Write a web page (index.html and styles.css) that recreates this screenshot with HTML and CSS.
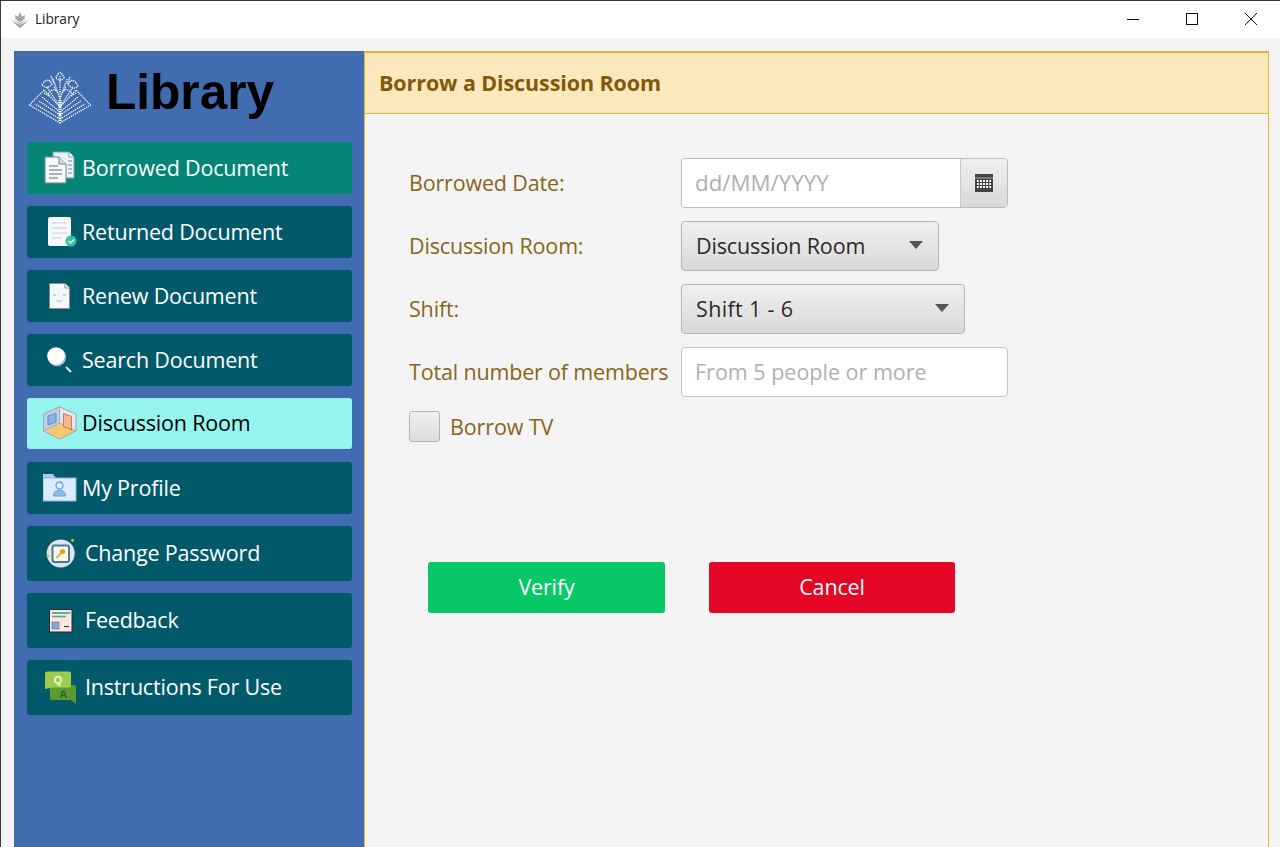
FILE: index.html
```html
<!DOCTYPE html>
<html>
<head>
    <title>Library</title>
    <meta charset="utf-8">
    <link rel="stylesheet" href="styles.css">
</head>
<body>
<div class="window">
    <!-- Title bar -->
    <div class="titlebar">
        <svg class="title-icon" width="18" height="18" viewBox="0 0 18 18">
            <path d="M0 9.5 L9 14 L18 9.5 L9 17 Z" fill="#a0a0a0"/>
            <path d="M1.5 8 L9 12 L16.5 8 L9 14 Z" fill="#bdbdbd"/>
            <path d="M4.5 8 L4 4 L7 5.5 L9 1 L11 5.5 L14 4 L13.5 8 L9 11.5 Z" fill="#a8a8a8"/>
        </svg>
        <span class="title-text">Library</span>
        <div class="win-controls">
            <svg class="win-btn" width="12" height="12" viewBox="0 0 12 12"><path d="M0 6.5 H12" stroke="#111" fill="none"/></svg>
            <svg class="win-btn" width="12" height="12" viewBox="0 0 12 12"><rect x="0.5" y="0.5" width="11" height="11" stroke="#111" fill="none"/></svg>
            <svg class="win-btn" width="12" height="12" viewBox="0 0 12 12"><path d="M0 0 L12 12 M12 0 L0 12" stroke="#111" fill="none"/></svg>
        </div>
    </div>

    <div class="shell">
        <!-- Left menu -->
        <aside class="sidebar">
            <div class="brand">
                <svg class="brand-logo" width="62" height="56" viewBox="0 0 62 56">
                    <g fill="none" stroke="#fff" stroke-width="1.25" stroke-dasharray="1.3 0.9">
                        <path d="M31 54 L0.5 36 L15 21 L31 38 L47 21 L61.5 36 Z"/>
                        <path d="M31 50 L6 35 M31 46 L10 32 M31 43 L13 28 M31 50 L56 35 M31 46 L52 32 M31 43 L49 28"/>
                        <path d="M31 52 V6 M30 52 V30 M32 52 V30 M31 38 L18 18 M31 38 L44 18 M31 30 L24 10 M31 30 L38 10"/>
                        <path d="M27 9 Q31 -2 35 9 Q31 13 27 9 M13 16 Q18 7 23 15 Q18 21 13 16 M39 15 Q44 7 49 17 Q44 22 39 15 M19 25 Q25 17 29 24 M33 24 Q38 17 43 25"/>
                        <path d="M22 7 L25 14 M41 8 L38 15 M15 24 L20 27 M47 24 L42 27 M25 18 L28 22 M37 18 L34 22 M20 11 L22 13 M43 11 L40 13"/>
                    </g>
                </svg>
                <span class="brand-name">Library</span>
            </div>

            <nav class="menu">
                <a class="menu-item menu-current">
                    <svg class="menu-icon" width="40" height="40" viewBox="0 0 40 40">
                        <path d="M10 4 H26 L31 9 V30 H10 Z" fill="#e9f1f6" stroke="#8d9aa6"/>
                        <path d="M26 4 V9 H31" fill="#fff" stroke="#8d9aa6"/>
                        <path d="M25 13 H29 M25 17 H29 M25 21 H29 M25 25 H29" stroke="#9fb0bd" stroke-width="1.4"/>
                        <path d="M2 9 H16 L23 16 V35 H2 Z" fill="#f4f8fa" stroke="#77858f"/>
                        <path d="M16 9 V16 H23" fill="#d5e0e7" stroke="#77858f"/>
                        <path d="M6 18 H15 M6 22 H19 M6 26 H19 M6 30 H15" stroke="#8d9aa6" stroke-width="1.4"/>
                    </svg>
                    <span>Borrowed Document</span>
                </a>
                <a class="menu-item">
                    <svg class="menu-icon" width="40" height="40" viewBox="0 0 40 40">
                        <rect x="5" y="5" width="23" height="29" rx="2" fill="#f6f8f9"/>
                        <path d="M9 11 H24 M9 16 H24 M9 21 H24 M9 26 H19" stroke="#d7dde1" stroke-width="1.3"/>
                        <circle cx="28" cy="29" r="5.5" fill="#2bc6a0"/>
                        <path d="M25.5 29 L27.5 31 L31 27.5" stroke="#fff" stroke-width="1.5" fill="none"/>
                    </svg>
                    <span>Returned Document</span>
                </a>
                <a class="menu-item">
                    <svg class="menu-icon" width="40" height="40" viewBox="0 0 40 40">
                        <path d="M6.5 7.5 H22 L26.5 12 V32.5 H6.5 Z" fill="#f5f8fa" stroke="#8c8a8a"/>
                        <path d="M22 7.5 V12 H26.5" fill="#fff" stroke="#8c8a8a"/>
                        <path d="M10 19 H13 M20 19 H23" stroke="#bcd2e4" stroke-width="1.8"/>
                        <path d="M12.5 24 Q16.5 30 20.5 24 Z" fill="#bfe0f2"/>
                    </svg>
                    <span>Renew Document</span>
                </a>
                <a class="menu-item">
                    <svg class="menu-icon" width="40" height="40" viewBox="0 0 40 40">
                        <circle cx="14" cy="17" r="9.2" fill="#9cb6d6"/>
                        <circle cx="13" cy="16" r="8.8" fill="#fff"/>
                        <path d="M23 27 L28 32" stroke="#e8eef2" stroke-width="1.8"/>
                    </svg>
                    <span>Search Document</span>
                </a>
                <a class="menu-item menu-selected">
                    <svg class="menu-icon" width="40" height="40" viewBox="0 0 40 40">
                        <path d="M16.5 3 L33 10 V27 L16.5 35 L0.5 27 V10 Z" fill="#f6c873" stroke="#a9a4a0"/>
                        <path d="M16.5 3 L0.5 10 V27 L16.5 19 Z" fill="#b6d0ee" stroke="#a9a4a0" stroke-width="0.8"/>
                        <path d="M16.5 3 L33 10 V27 L16.5 19 Z" fill="#dbe7f5" stroke="#a9a4a0" stroke-width="0.8"/>
                        <path d="M5 12 L13 9.5 V18 L5 21 Z" fill="#8fb2e0" stroke="#5c7ea8" stroke-width="0.8"/>
                        <path d="M20.5 9.5 L28.5 12.5 V26 L20.5 22.5 Z" fill="#f5b58a" stroke="#c2673b" stroke-width="0.8"/>
                    </svg>
                    <span>Discussion Room</span>
                </a>
                <a class="menu-item">
                    <svg class="menu-icon" width="40" height="40" viewBox="0 0 40 40">
                        <path d="M0 6 H10 L13 10 H33 V33 H0 Z" fill="#a9cbec"/>
                        <rect x="0" y="10" width="33" height="23" fill="#dcecfb" stroke="#8fb8e2"/>
                        <circle cx="16.5" cy="17.5" r="3.5" fill="#dcecfb" stroke="#6d9fdc" stroke-width="1.3"/>
                        <path d="M10.5 28 Q10.5 22.5 16.5 22.5 Q22.5 22.5 22.5 28 Z" fill="#8fbbe8" stroke="#6d9fdc"/>
                    </svg>
                    <span>My Profile</span>
                </a>
                <a class="menu-item menu-tall">
                    <svg class="menu-icon" width="40" height="40" viewBox="0 0 40 40">
                        <circle cx="17.7" cy="19.5" r="14" fill="#dfe3f4"/>
                        <rect x="9.5" y="11.5" width="16.5" height="16.5" rx="2" fill="#fdf7ea" stroke="#3f8287" stroke-width="2"/>
                        <circle cx="19.5" cy="17.5" r="2.6" fill="#e89a2c"/>
                        <path d="M18 19 L13.5 24" stroke="#e89a2c" stroke-width="1.8"/>
                        <circle cx="29.5" cy="6.5" r="1.4" fill="#e8b93c"/>
                        <circle cx="5" cy="22" r="1.5" fill="#e8b93c"/>
                    </svg>
                    <span>Change Password</span>
                </a>
                <a class="menu-item menu-tall">
                    <svg class="menu-icon" width="40" height="40" viewBox="0 0 40 40">
                        <rect x="6.5" y="8.5" width="22.5" height="22.5" fill="#fbe6e4" stroke="#23292c"/>
                        <path d="M9 12 H27" stroke="#4bb07c" stroke-width="1.8"/>
                        <path d="M9 15.5 H23" stroke="#4bb07c" stroke-width="1.6"/>
                        <rect x="9" y="21" width="7" height="7" fill="#8aa6d0" stroke="#5a7699" stroke-width="0.7"/>
                        <path d="M21 25.5 H26" stroke="#3a3f42" stroke-width="1.2"/>
                    </svg>
                    <span>Feedback</span>
                </a>
                <a class="menu-item menu-tall">
                    <svg class="menu-icon" width="40" height="40" viewBox="0 0 40 40">
                        <path d="M9 17 H31 Q33 17 33 19 V36 L28 32 H9 Q7 32 7 30 V19 Q7 17 9 17 Z" fill="#5d9a30"/>
                        <path d="M5 3.5 H26 Q28 3.5 28 5.5 V17 Q28 19.5 26 19.5 H10 L2 21 V5.5 Q2 3.5 5 3.5 Z" fill="#9ccc49"/>
                        <text class="qa-q" x="15" y="15.5" text-anchor="middle">Q</text>
                        <text class="qa-a" x="20" y="30" text-anchor="middle">A</text>
                    </svg>
                    <span>Instructions For Use</span>
                </a>
            </nav>
        </aside>

        <!-- Borrow form -->
        <main class="panel">
            <div class="panel-head">Borrow a Discussion Room</div>
            <form class="panel-body">
                <div class="row">
                    <label class="field-label">Borrowed Date:</label>
                    <div class="date-picker">
                        <input class="date-input" type="text" placeholder="dd/MM/YYYY">
                        <button class="date-btn" type="button">
                            <svg width="18" height="18" viewBox="0 0 18 18">
                                <rect width="18" height="18" fill="#444"/>
                                <path d="M0 4 H18" stroke="#fff" stroke-width="0.6"/>
                                <g fill="#eee">
                                    <rect x="2" y="6" width="2" height="2"/><rect x="5" y="6" width="2" height="2"/><rect x="8" y="6" width="2" height="2"/><rect x="11" y="6" width="2" height="2"/><rect x="14" y="6" width="2" height="2"/>
                                    <rect x="2" y="9" width="2" height="2"/><rect x="5" y="9" width="2" height="2"/><rect x="8" y="9" width="2" height="2"/><rect x="11" y="9" width="2" height="2"/><rect x="14" y="9" width="2" height="2"/>
                                    <rect x="2" y="12" width="2" height="2"/><rect x="5" y="12" width="2" height="2"/><rect x="8" y="12" width="2" height="2"/><rect x="11" y="12" width="2" height="2"/><rect x="14" y="12" width="2" height="2"/>
                                </g>
                            </svg>
                        </button>
                    </div>
                </div>
                <div class="row">
                    <label class="field-label">Discussion Room:</label>
                    <button class="combo combo-room" type="button"><span>Discussion Room</span><i class="arrow"></i></button>
                </div>
                <div class="row">
                    <label class="field-label">Shift:</label>
                    <button class="combo combo-shift" type="button"><span>Shift 1 - 6</span><i class="arrow"></i></button>
                </div>
                <div class="row">
                    <label class="field-label">Total number of members</label>
                    <input class="text-input" type="text" placeholder="From 5 people or more">
                </div>
                <label class="check-row">
                    <input class="check" type="checkbox">
                    <span>Borrow TV</span>
                </label>
                <div class="actions">
                    <button class="action action-ok" type="button">Verify</button>
                    <button class="action action-cancel" type="button">Cancel</button>
                </div>
            </form>
        </main>
    </div>
</div>
</body>
</html>
```

FILE: styles.css
```css
html, body {
    margin: 0;
    padding: 0;
    height: 100%;
    overflow: hidden;
}

body {
    font-family: "Open Sans", "Noto Sans", sans-serif;
    background: #f4f4f4;
}

.window {
    height: 847px;
    box-sizing: border-box;
    border-top: 1px solid #3a3a3a;
    border-left: 1px solid #3a3a3a;
    display: flex;
    flex-direction: column;
    overflow: hidden;
}

/* title bar */
.titlebar {
    height: 37px;
    flex: none;
    background: #fff;
    display: flex;
    align-items: center;
    padding-left: 10px;
}

.title-icon {
    margin-right: 6px;
}

.title-text {
    font-size: 13.8px;
    letter-spacing: -0.1px;
    line-height: 18px;
    padding-bottom: 2px;
    color: #222;
}

.win-controls {
    margin-left: auto;
    display: flex;
    gap: 47px;
    padding: 0 23px 2px 0;
}

.win-btn {
    display: block;
}

.shell {
    flex: 1;
    display: flex;
    padding: 13px 11px 0 13px;
    min-height: 0;
}

/* sidebar */
.sidebar {
    width: 350px;
    flex: none;
    box-sizing: border-box;
    background: #426cb0;
    padding: 0 12px 0 13px;
}

.brand {
    height: 91px;
    display: flex;
    align-items: center;
    padding-left: 2px;
    gap: 15px;
}

.brand-logo {
    flex: none;
}

.brand-name {
    font-family: "Liberation Sans", Arial, sans-serif;
    font-weight: bold;
    font-size: 49.6px;
    padding-bottom: 10px;
    color: #000;
}

.menu {
    display: flex;
    flex-direction: column;
    gap: 12px;
}

.menu-item {
    height: 52px;
    display: flex;
    align-items: center;
    padding-left: 16px;
    background: #01596a;
    border-radius: 3px;
    color: #fff;
    font-size: 21.5px;
    letter-spacing: -0.2px;
}

.menu-item span {
    margin-left: -1px;
    padding-bottom: 2px;
}

.menu-icon {
    flex: none;
    width: 40px;
    height: 40px;
}

.menu-current {
    background: #058575;
}

.menu-selected {
    height: 51px;
    margin-bottom: 1px;
    background: #95f5ee;
    color: #000;
}

.menu-tall {
    height: 55px;
}

.menu-tall .menu-icon {
    margin-right: 3px;
}

.qa-q {
    font-family: "Liberation Sans", Arial, sans-serif;
    font-weight: bold;
    font-size: 11px;
    fill: #f2f8e4;
}

.qa-a {
    font-family: "Liberation Sans", Arial, sans-serif;
    font-weight: bold;
    font-size: 11px;
    fill: #2e6a1f;
}

/* main panel */
.panel {
    flex: 1;
    box-sizing: border-box;
    border: 1px solid #efb033;
    border-top-width: 2px;
    margin-bottom: -10px;
}

.panel-head {
    height: 61px;
    box-sizing: border-box;
    border-bottom: 1px solid #efb033;
    background: #fbe9bd;
    display: flex;
    align-items: center;
    padding: 0 0 2px 14px;
    font-size: 21.5px;
    font-weight: bold;
    letter-spacing: -0.1px;
    color: #80590c;
}

.panel-body {
    display: flex;
    flex-direction: column;
    gap: 13px;
    padding: 44px 0 0 44px;
}

.row {
    display: flex;
    align-items: center;
    height: 50px;
}

.field-label {
    width: 272px;
    flex: none;
    padding-bottom: 2px;
    font-size: 21.5px;
    letter-spacing: -0.17px;
    color: #8a6418;
}

/* inputs */
.date-picker {
    width: 327px;
    height: 50px;
    box-sizing: border-box;
    display: flex;
    border: 1px solid #bcbcbc;
    border-radius: 4px;
    overflow: hidden;
}

.date-input {
    flex: 1;
    min-width: 0;
    border: 0;
    outline: 0;
    padding: 0 13px 2px;
    background: #fff;
    font: 22.3px "Open Sans", sans-serif;
}

.date-btn {
    width: 47px;
    flex: none;
    padding: 0;
    border: 0;
    border-left: 1px solid #c8c8c8;
    background: linear-gradient(#efefef, #d9d9d9);
    display: flex;
    align-items: center;
    justify-content: center;
}

.text-input {
    width: 327px;
    height: 50px;
    box-sizing: border-box;
    border: 1px solid #c6c6c6;
    border-radius: 4px;
    outline: 0;
    padding: 0 13px 2px;
    background: #fff;
    font: 21.5px "Open Sans", sans-serif;
}

.date-input::placeholder,
.text-input::placeholder {
    color: #b0b0b0;
    opacity: 1;
}

.combo {
    height: 50px;
    box-sizing: border-box;
    display: flex;
    align-items: center;
    justify-content: space-between;
    padding: 0 15px 2px 14px;
    border: 1px solid #b4b4b4;
    border-radius: 4px;
    background: linear-gradient(#f0f0f0, #d9d9d9);
    font: 21.5px "Open Sans", sans-serif;
    letter-spacing: -0.15px;
    color: #2a2a2a;
}

.combo-room {
    width: 258px;
}

.combo-shift {
    width: 284px;
    letter-spacing: 0.35px;
}

.arrow {
    width: 0;
    height: 0;
    border-left: 7px solid transparent;
    border-right: 7px solid transparent;
    border-top: 8px solid #555;
}

/* checkbox */
.check-row {
    display: flex;
    align-items: center;
    gap: 10px;
    height: 31px;
    margin-top: 1px;
    font-size: 21.5px;
    letter-spacing: -0.1px;
    color: #8a6418;
}

.check {
    appearance: none;
    margin: 0;
    width: 31px;
    height: 31px;
    box-sizing: border-box;
    border: 1px solid #b4b4b4;
    border-radius: 3px;
    background: linear-gradient(#f0f0f0, #dcdcdc);
}

/* bottom buttons */
.actions {
    display: flex;
    gap: 44px;
    margin-top: 107px;
    padding-left: 19px;
}

.action {
    height: 51px;
    padding: 0 0 2px;
    border: 0;
    border-radius: 3px;
    color: #fff;
    font: 21.5px "Open Sans", sans-serif;
    letter-spacing: -0.15px;
}

.action-ok {
    width: 237px;
    background: #08c767;
}

.action-cancel {
    width: 246px;
    background: #e30625;
}
```
